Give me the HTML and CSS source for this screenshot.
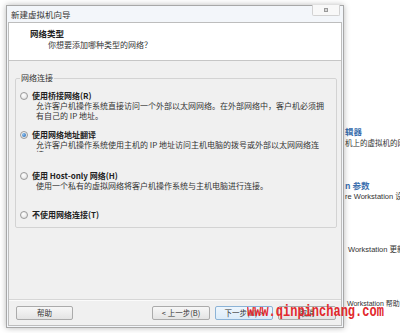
FILE: index.html
```html
<!DOCTYPE html>
<html lang="zh-CN">
<head>
<meta charset="utf-8">
<title>新建虚拟机向导</title>
<link rel="stylesheet" href="styles.css">
</head>
<body>
<div class="desk">
  <div class="window">
    <div class="titlebar">
      <span class="title">新建虚拟机向导</span>
      <span class="close"><span class="close-glyph"></span></span>
    </div>
    <div class="client">
      <div class="header">
        <div class="h-title">网络类型</div>
        <div class="h-sub">你想要添加哪种类型的网络？</div>
      </div>
      <div class="content">
        <fieldset class="group">
          <legend>网络连接</legend>
          <div class="opt opt1">
            <div class="opt-row"><span class="radio"></span><span class="opt-label">使用桥接网络(R)</span></div>
            <div class="desc">允许客户机操作系统直接访问一个外部以太网网络。在外部网络中，客户机必须拥有自己的 IP 地址。</div>
          </div>
          <div class="opt opt2">
            <div class="opt-row"><span class="radio checked"></span><span class="opt-label">使用网络地址翻译</span></div>
            <div class="desc desc-clip">允许客户机操作系统使用主机的 IP 地址访问主机电脑的拨号或外部以太网网络连接。</div>
          </div>
          <div class="opt opt3">
            <div class="opt-row"><span class="radio"></span><span class="opt-label">使用 Host-only 网络(H)</span></div>
            <div class="desc">使用一个私有的虚拟网络将客户机操作系统与主机电脑进行连接。</div>
          </div>
          <div class="opt opt4">
            <div class="opt-row"><span class="radio"></span><span class="opt-label">不使用网络连接(T)</span></div>
          </div>
        </fieldset>
      </div>
      <div class="footer">
        <button class="btn btn-help">帮助</button>
        <div class="spacer"></div>
        <button class="btn">&lt; 上一步(B)</button>
        <button class="btn btn-default">下一步(N) &gt;</button>
        <button class="btn">取消</button>
      </div>
    </div>
    <div class="watermark">www.qinpinchang.com</div>
  </div>
  <div class="side">
    <div class="s-block b1">
      <div class="s-title">辑器</div>
      <div class="s-text">机上的虚拟机的网</div>
    </div>
    <div class="s-block b2">
      <div class="s-title">n 参数</div>
      <div class="s-text">re Workstation 设</div>
    </div>
    <div class="s-block b3">
      <div class="s-text">Workstation 更新</div>
    </div>
    <div class="s-block b4">
      <div class="s-text small">Workstation 帮助</div>
    </div>
  </div>
</div>
</body>
</html>
```

FILE: styles.css
```css
* { box-sizing: border-box; }
html, body {
  margin: 0;
  padding: 0;
  background: #ffffff;
  font-family: "Noto Sans CJK SC", "Liberation Sans", sans-serif;
  color: #222;
}
.desk {
  display: flex;
  align-items: flex-start;
  width: 400px;
  height: 333px;
  overflow: hidden;
}
.window {
  position: relative;
  z-index: 1;
  flex: none;
  margin: 5px 0 0 6px;
  width: 338px;
  height: 323px;
  border: 1px solid #a8a8a8;
  padding: 0 1px 1px 1px;
  background: #f3f6fa;
  box-shadow: 0 0 6px rgba(0, 0, 0, 0.28);
  display: flex;
  flex-direction: column;
}
.titlebar {
  height: 16px;
  flex: none;
  display: flex;
  justify-content: space-between;
  align-items: center;
  padding-left: 3px;
}
.title {
  font-size: 8.5px;
  line-height: 16px;
  color: #333;
}
.close {
  align-self: flex-start;
  margin-top: -1px;
  margin-right: 2px;
  width: 28px;
  height: 11px;
  border: 1px solid #d2d2d2;
  border-top: none;
  border-radius: 0 0 2px 2px;
  background: #f8f8f8;
  display: flex;
  align-items: center;
  justify-content: center;
}
.close-glyph {
  width: 4px;
  height: 4px;
  border: 1px solid #9a9a9a;
  background: #d8d8d8;
}
.client {
  flex: 1;
  border: 1px solid #bdbdbd;
  background: #f0f0f0;
  display: flex;
  flex-direction: column;
}
.header {
  flex: none;
  height: 38px;
  background: #ffffff;
  border-bottom: 1px solid #c6c6c6;
  padding: 5px 0 0 21px;
}
.h-title {
  font-size: 8.5px;
  line-height: 11px;
  font-weight: bold;
  color: #222;
}
.h-sub {
  font-size: 8px;
  line-height: 11px;
  color: #333;
  padding-left: 18px;
}
.content {
  flex: 1;
  padding: 0;
}
.group {
  margin: 11px 4px 0 6px;
  padding: 6px 4px 7px 4px;
  border: 1px solid #d3d3d3;
  border-radius: 2px;
  min-inline-size: 0;
}
.group legend {
  padding: 0 1px;
  font-size: 8px;
  line-height: 12px;
  color: #333;
}
.opt1 { height: 39px; }
.opt2 { height: 41px; }
.opt3 { height: 39px; }
.opt4 { height: 11px; }
.opt-row {
  display: flex;
  align-items: center;
  gap: 4px;
  height: 11px;
}
.radio {
  flex: none;
  width: 8px;
  height: 8px;
  border-radius: 50%;
  border: 1px solid #9a9a9a;
  background: radial-gradient(circle at 40% 35%, #ffffff 0%, #e6e6e6 70%, #d2d2d2 100%);
  display: flex;
  align-items: center;
  justify-content: center;
}
.radio.checked::after {
  content: "";
  width: 4px;
  height: 4px;
  border-radius: 50%;
  background: radial-gradient(circle at 35% 35%, #8fc3f0 0%, #2f6fb8 80%);
}
.opt-label {
  font-size: 8px;
  line-height: 11px;
  font-weight: bold;
  color: #222;
  white-space: nowrap;
}
.desc {
  margin-left: 16px;
  width: 290px;
  font-size: 8px;
  line-height: 10px;
  color: #333;
}
.desc-clip {
  max-height: 12px;
  overflow: hidden;
}
.footer {
  flex: none;
  height: 26px;
  border-top: 1px solid #d6d6d6;
  box-shadow: inset 0 1px 0 #fbfbfb;
  padding: 6px 5px 5px 7px;
  display: flex;
  align-items: flex-start;
  gap: 5px;
}
.spacer { flex: 1; }
.btn {
  flex: none;
  width: 58px;
  height: 14px;
  padding: 0;
  margin: 0;
  border: 1px solid #ababab;
  border-radius: 2px;
  background: linear-gradient(#f7f7f7, #e4e4e4);
  font-family: "Noto Sans CJK SC", "Liberation Sans", sans-serif;
  font-size: 7.5px;
  line-height: 12px;
  color: #333;
}
.btn-help { width: 57px; }
.btn-default {
  border-color: #8cb3d6;
  background: linear-gradient(#eef6fd, #dcecf9);
}
.watermark {
  position: absolute;
  left: 240px;
  top: 296px;
  font-family: "Liberation Mono", monospace;
  font-weight: bold;
  font-size: 17px;
  line-height: 20px;
  color: #e2282c;
  white-space: nowrap;
  transform: scaleX(0.706);
  transform-origin: left top;
}
.side {
  flex: none;
  width: 56px;
  height: 333px;
  overflow: hidden;
  white-space: nowrap;
  padding-left: 1px;
}
.s-title {
  font-size: 8.5px;
  line-height: 12px;
  font-weight: bold;
  color: #3b6fae;
}
.s-text {
  font-family: "Liberation Sans", "Noto Sans CJK SC", sans-serif;
  font-size: 7.5px;
  line-height: 12px;
  color: #333;
}
.b1 { margin-top: 125px; }
.b1 .s-text { line-height: 13px; }
.b2 { margin-top: 29px; }
.b3 { margin-top: 41px; padding-left: 3px; }
.b4 { margin-top: 42px; padding-left: 2px; }
.s-text.small { font-size: 7px; }
```
